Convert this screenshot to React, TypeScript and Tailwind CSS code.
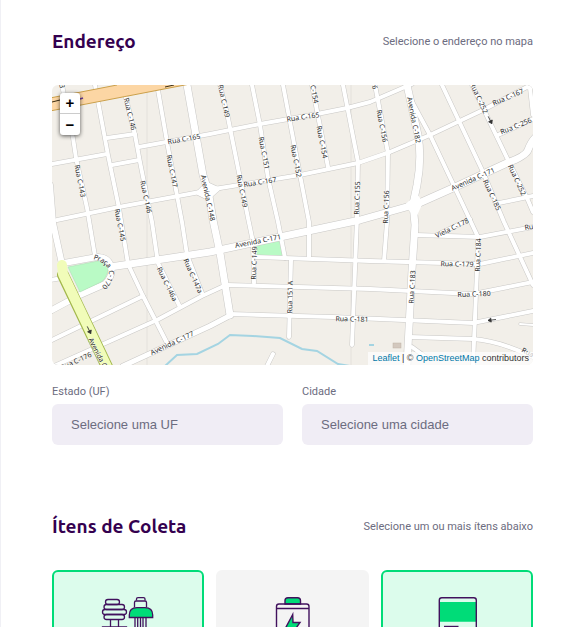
import React from "react";

type Road = { d: string; w?: number };
type Label = { t: string; x: number; y: number; a: number };

const roads: Road[] = [
  { d: "M62 85L73 138L76 158L87 208L95 256" },
  { d: "M95 85L108 155L119 208L128 264L143 296L167 343" },
  { d: "M124 90L135 135L140 162L152 222L158 263L180 307" },
  { d: "M158 90L167 142L182 222L187 255L202 293" },
  { d: "M107 138L135 134" },
  { d: "M139 147L210 134L260 124L317 114L347 108L370 102L412 84" },
  { d: "M112 165L139 160" },
  { d: "M52 164L107 154" },
  { d: "M57 220L119 207L200 192" },
  { d: "M214 189L300 175L358 163L390 152L430 135L483 110L527 87L530 88L533 115" },
  { d: "M220 85L228 118L248 218L253 242L254 283" },
  { d: "M252 85L260 125L268 178L278 222L285 258" },
  { d: "M283 85L290 122L300 175L309 222L309 258" },
  { d: "M312 85L328 167" },
  { d: "M343 85L358 162L357 218L352 345" },
  { d: "M375 85L388 153L387 222L384 261" },
  { d: "M410 98L430 135L455 188L478 237L477 270L473 365" },
  { d: "M442 85L483 172L504 222L533 285" },
  { d: "M472 85L508 160L527 198L533 212" },
  { d: "M498 135L533 119" },
  { d: "M499 203L533 196" },
  { d: "M416 235L480 237L533 227" },
  { d: "M437 235L470 219" },
  { d: "M256 257L370 261L480 264L533 253" },
  { d: "M227 285L370 289L473 294L533 282" },
  { d: "M230 314L333 317L473 323L533 311" },
  { d: "M410 337L473 339Q500 341 533 357" },
  { d: "M520 324L533 325", w: 2 },
  { d: "M412 347L427 358" },
  { d: "M291 260L289 337" },
  { d: "M273 354L266 368" },
  { d: "M50 280L62 278" },
  { d: "M52 340L143 296" },
  { d: "M52 367L157 320L202 296L226 285" },
  { d: "M123 366L210 326L231 315", w: 5 },
  { d: "M64 263L97 257C111 256 117 272 105 284Q96 288 80 295L52 310", w: 6 },
  { d: "M50 185L53 223L62 264", w: 6 },
  { d: "M187 85L203 175L208 190L213 220L220 253L230 315", w: 7 },
  { d: "M110 267L210 252L280 237L360 220L417 204L453 188L507 163Q526 156 528 150Q531 142 535 138", w: 7 },
  { d: "M407 85L418 135Q422 158 417 185L413 204L415 225L412 270L407 366", w: 7 },
];

const labels: Label[] = [
  { t: "Rua C-143", x: 59, y: 72, a: 78 },
  { t: "Rua C-146", x: 130, y: 114, a: 77 },
  { t: "Rua C-165", x: 184, y: 139, a: -10 },
  { t: "Rua C-143", x: 80, y: 181, a: 79 },
  { t: "Rua C-147", x: 172, y: 171, a: 79 },
  { t: "Rua C-146", x: 146, y: 197, a: 78 },
  { t: "Rua C-145", x: 120, y: 225, a: 79 },
  { t: "Avenida C-148", x: 208, y: 198, a: 78 },
  { t: "Rua C-149", x: 224, y: 101, a: 78 },
  { t: "Rua C-151", x: 264, y: 153, a: 79 },
  { t: "Rua C-152", x: 296, y: 161, a: 79 },
  { t: "Rua C-154", x: 322, y: 142, a: 79 },
  { t: "Rua C-154", x: 313, y: 87, a: 79 },
  { t: "Rua C-165", x: 303, y: 117, a: -8 },
  { t: "Rua C-149", x: 242, y: 191, a: 79 },
  { t: "Rua C-167", x: 260, y: 182, a: -9 },
  { t: "Rua C-155", x: 357, y: 198, a: -88 },
  { t: "Rua C-156", x: 382, y: 126, a: 79 },
  { t: "Rua C-156", x: 372, y: 73, a: 79 },
  { t: "Avenida C-182", x: 414, y: 120, a: 79 },
  { t: "Rua C-252", x: 479, y: 98, a: 65 },
  { t: "Rua C-167", x: 508, y: 97, a: -23 },
  { t: "Rua C-256", x: 516, y: 126, a: -22 },
  { t: "Avenida C-171", x: 473, y: 179, a: -24 },
  { t: "Rua C-185", x: 492, y: 195, a: 65 },
  { t: "Rua C-252", x: 517, y: 180, a: 65 },
  { t: "Rua C-156", x: 386, y: 207, a: -88 },
  { t: "Viela C-178", x: 452, y: 228, a: -26 },
  { t: "Rua C-179", x: 457, y: 264, a: 1 },
  { t: "Rua C-184", x: 478, y: 255, a: -88 },
  { t: "Rua C-180", x: 474, y: 294, a: -2 },
  { t: "Rua C-183", x: 412, y: 287, a: -87 },
  { t: "Rua C-181", x: 352, y: 319, a: 1 },
  { t: "Rua C-178", x: 541, y: 225, a: -9 },
  { t: "Rua C-182", x: 537, y: 357, a: 27 },
  { t: "Avenida C-171", x: 258, y: 241, a: -11 },
  { t: "Rua C-149", x: 254, y: 263, a: -88 },
  { t: "Rua 151 A", x: 290, y: 297, a: -89 },
  { t: "Avenida C-177", x: 172, y: 343, a: -25 },
  { t: "Rua C-146a", x: 167, y: 284, a: 64 },
  { t: "Rua C-147a", x: 193, y: 276, a: 66 },
  { t: "Rua C-176", x: 76, y: 361, a: -25 },
  { t: "Avenida C-170", x: 101, y: 359, a: 63 },
];

const arrow = "M-4 0H4M4 0L1 -2V2Z";

function StreetMap() {
  return (
    <svg
      viewBox="52 85 481 280"
      preserveAspectRatio="xMidYMid slice"
      className="block h-full w-full"
      fontFamily="'Noto Sans', sans-serif"
      fontSize={7}
      role="img"
      aria-label="Mapa"
    >
      <rect x="52" y="85" width="481" height="280" fill="#f2efe9" />
      <path d="M147 85V365M351 85V365" stroke="#e4e1dc" strokeWidth="1" />
      <path
        d="M165 366L177 355L197 354L218 344L230 335L253 336L280 338L302 349L317 351L338 364L350 366"
        fill="none"
        stroke="#a4d4e2"
        strokeWidth="2"
      />
      <path d="M256 245L280 240L284 256L257 255Z" fill="#b9fac5" />
      <rect x="393" y="343" width="8" height="5" fill="#d3c8be" stroke="#bfb2a6" strokeWidth="0.5" />
      <rect x="369" y="344" width="5" height="2" fill="#a4d4e2" />
      <g fill="none" strokeLinecap="round" strokeLinejoin="round" stroke="#c9c8c6">
        {roads.map((r, i) => (
          <path key={i} d={r.d} strokeWidth={(r.w ?? 4) + 1} />
        ))}
        <path d="M198 193L207 184L218 189L208 198Z" strokeWidth="5" />
      </g>
      <g fill="none" strokeLinecap="round" strokeLinejoin="round" stroke="#fff">
        {roads.map((r, i) => (
          <path key={i} d={r.d} strokeWidth={r.w ?? 4} />
        ))}
        <path d="M198 193L207 184L218 189L208 198Z" fill="#fff" strokeWidth="4" />
        <path d="M408 205L417 198L420 203L415 214Z" fill="#fff" strokeWidth="5" />
      </g>
      <path
        d="M68 267L98 261Q106 262 108 269Q107 278 101 282L80 292Z"
        fill="#b9fac5"
        stroke="#a6dcb0"
        strokeWidth="0.5"
      />
      <path d="M50 98L117 85L124 83H195L185 85L50 111Z" fill="#fcd6a4" />
      <path d="M50 98L117 85M50 111L190 84" stroke="#cba04b" strokeWidth="1" />
      <path d="M52 102L60 100M165 87L174 85" stroke="#3a2c10" strokeWidth="1" />
      <path d="M80 99L83 98" stroke="#6a3d9a" strokeWidth="1.5" />
      <g fill="none" strokeLinecap="round" strokeLinejoin="round">
        <path d="M63 275L109 371" stroke="#a3b84c" strokeWidth="12" />
        <path d="M62 265L63 274L109 371" stroke="#f1fcb9" strokeWidth="10" />
      </g>
      <g stroke="#333" strokeWidth="0.8" fill="#333">
        <path d={arrow} transform="translate(89 330) rotate(64)" />
        <path d={arrow} transform="translate(490 120) rotate(64)" />
        <path d={arrow} transform="translate(492 320) rotate(173)" />
      </g>
      <g fill="#2b2b2b" stroke="#fff" strokeOpacity="0.6" strokeWidth="1" paintOrder="stroke">
        {labels.map((l, i) => (
          <text
            key={i}
            textAnchor="middle"
            dy="2.5"
            transform={`translate(${l.x} ${l.y}) rotate(${l.a})`}
          >
            {l.t}
          </text>
        ))}
        <path id="praca" d="M93 259Q107 263 109 271Q110 279 98 291" fill="none" stroke="none" />
        <text>
          <textPath href="#praca">Praça C-170</textPath>
        </text>
      </g>
    </svg>
  );
}

function SectionHeader({ title, hint }: { title: string; hint: string }) {
  return (
    <div className="flex items-center justify-between">
      <h2 className="font-['Ubuntu','Noto_Sans',sans-serif] text-[19px] leading-6 font-bold text-[#34004f]">
        {title}
      </h2>
      <span className="pt-0.5 text-[11px] leading-4 text-[#6c6c80]">{hint}</span>
    </div>
  );
}

function Field({ id, label, placeholder }: { id: string; label: string; placeholder: string }) {
  return (
    <div className="flex min-w-0 flex-1 flex-col gap-1">
      <label htmlFor={id} className="text-[11px] leading-4 text-[#6c6c80]">
        {label}
      </label>
      <select
        id={id}
        className="h-[41px] w-full appearance-none rounded-md bg-[#f0edf5] px-[19px] font-['Liberation_Sans',Arial,sans-serif] text-[13px] text-[#6c6c80]"
      >
        <option>{placeholder}</option>
      </select>
    </div>
  );
}

function LampIcon() {
  return (
    <svg viewBox="100 597 56 48" className="h-12 w-14" fill="none" stroke="#41115d" strokeWidth="1.3">
      <rect x="105.5" y="599.5" width="14" height="5" rx="2.5" />
      <rect x="104" y="604.5" width="20.5" height="5" rx="2.5" />
      <rect x="102.5" y="609.5" width="24" height="5" rx="2.5" />
      <rect x="104" y="614.5" width="20.5" height="5" rx="2.5" />
      <path d="M110.5 620V627M118.5 620V627M102.500 627H126.500V638H102.500Z" />
      <path d="M136.5 600.5V599Q136.5 597.700 138 597.700H143.500Q145 597.700 145 599V600.500" />
      <path d="M134.5 607.5V602.5Q134.5 601 136 601H145Q146.5 601 146.5 602.5V607.5" />
      <path d="M129.3 617.5V615Q129.3 607.7 137 607.7H145Q152.7 607.7 152.7 615V617.5Z" fill="#00dc78" />
      <path d="M135 617.5V638M137.7 617.5V638M140.5 617.5V638M143 617.5V638M146 617.5V638" />
    </svg>
  );
}

function BatteryIcon() {
  return (
    <svg viewBox="264 597 56 48" className="h-12 w-14" fill="none" stroke="#41115d" strokeWidth="1.4">
      <path d="M285 604V600.5Q285 597.7 288 597.7H297.5Q300.5 597.7 300.5 600.5V604Z" fill="#00dc78" />
      <rect x="276.5" y="604" width="32.5" height="40" rx="2.5" />
      <path d="M276.5 608.5H309" />
      <path d="M292.7 614.5L285 629H291L289 638L300 622.5H293Z" fill="#00dc78" />
    </svg>
  );
}

function OilIcon() {
  return (
    <svg viewBox="429 597 56 48" className="h-12 w-14" fill="none" stroke="#41115d" strokeWidth="1.4">
      <path d="M439.5 602H476V621.7H439.5Z" fill="#00dc78" stroke="none" />
      <rect x="439.3" y="597.7" width="37" height="46" rx="2.5" />
      <path d="M444 626.5H458.5" />
    </svg>
  );
}

function ItemCard({ name, selected, children }: { name: string; selected?: boolean; children: React.ReactNode }) {
  return (
    <button
      type="button"
      aria-label={name}
      aria-pressed={!!selected}
      className={
        "flex h-36 justify-center rounded-md border-2 pt-[25px] " +
        (selected ? "border-[#00dc78] bg-[#dcfcec]" : "border-[#f4f4f4] bg-[#f4f4f4]")
      }
    >
      {children}
    </button>
  );
}

export default function App() {
  return (
    <div className="h-screen overflow-hidden border-l border-[#f0f0f5] bg-white font-['Roboto',sans-serif]">
      <form className="flex flex-col pt-[29px] pr-[50px] pl-[51px]">
        <SectionHeader title="Endereço" hint="Selecione o endereço no mapa" />

        <div className="relative mt-8 h-[280px] overflow-hidden rounded-md">
          <StreetMap />
          <div className="absolute top-2 left-2 flex w-5 flex-col overflow-hidden rounded-[3px] bg-white font-['Liberation_Sans',sans-serif] text-[15px] leading-5 font-bold text-black shadow-[0_1px_4px_rgba(0,0,0,0.65)]">
            <button type="button" className="h-[21px] border-b border-[#ccc]">
              +
            </button>
            <button type="button" className="h-[21px]">
              −
            </button>
          </div>
          <div className="absolute right-0 bottom-0 bg-white/70 px-1 font-['Liberation_Sans',Arial,sans-serif] text-[9px] leading-[13px] text-[#333]">
            <a href="#leaflet" className="text-[#0078a8]">
              Leaflet
            </a>
            {" | © "}
            <a href="#osm" className="text-[#0078a8]">
              OpenStreetMap
            </a>
            {" contributors"}
          </div>
        </div>

        <div className="mt-[19px] flex gap-[19px]">
          <Field id="uf" label="Estado (UF)" placeholder="Selecione uma UF" />
          <Field id="city" label="Cidade" placeholder="Selecione uma cidade" />
        </div>

        <div className="mt-[69px]">
          <SectionHeader title="Ítens de Coleta" hint="Selecione um ou mais ítens abaixo" />
        </div>

        <div className="mt-8 grid grid-cols-3 gap-3">
          <ItemCard name="Lâmpadas" selected>
            <LampIcon />
          </ItemCard>
          <ItemCard name="Pilhas e Baterias">
            <BatteryIcon />
          </ItemCard>
          <ItemCard name="Óleo de Cozinha" selected>
            <OilIcon />
          </ItemCard>
        </div>
      </form>
    </div>
  );
}
